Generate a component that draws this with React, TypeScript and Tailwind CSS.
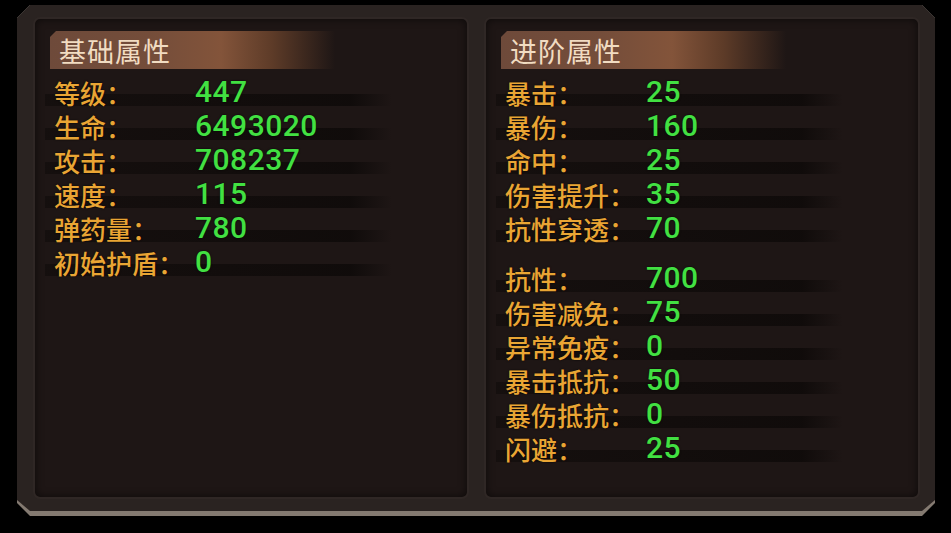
import React from "react";

type Row = { label: string; value: string };

const left: Row[] = [
  { label: "等级：", value: "447" },
  { label: "生命：", value: "6493020" },
  { label: "攻击：", value: "708237" },
  { label: "速度：", value: "115" },
  { label: "弹药量：", value: "780" },
  { label: "初始护盾：", value: "0" },
];

const right1: Row[] = [
  { label: "暴击：", value: "25" },
  { label: "暴伤：", value: "160" },
  { label: "命中：", value: "25" },
  { label: "伤害提升：", value: "35" },
  { label: "抗性穿透：", value: "70" },
];

const right2: Row[] = [
  { label: "抗性：", value: "700" },
  { label: "伤害减免：", value: "75" },
  { label: "异常免疫：", value: "0" },
  { label: "暴击抵抗：", value: "50" },
  { label: "暴伤抵抗：", value: "0" },
  { label: "闪避：", value: "25" },
];

function StatRow({ r }: { r: Row }) {
  return (
    <div className="relative flex h-[34px] items-center">
      <div className="absolute left-[10px] top-[18px] h-[12px] w-[347px] bg-[linear-gradient(to_right,rgba(10,7,6,0.45),rgba(10,7,6,0.7)_88%,rgba(10,7,6,0))]" />
      <div className="relative w-[160px] shrink-0 whitespace-nowrap pl-[19px] text-[26px] font-medium leading-none text-[#e9a534] [font-family:'Noto_Sans_CJK_SC',sans-serif] [text-shadow:0_0_2px_rgba(0,0,0,0.9)]">
        {r.label}
      </div>
      <div className="relative -mt-[2px] whitespace-nowrap text-[30px] font-medium leading-none tracking-[0.5px] text-[#42e042] [font-family:Roboto,sans-serif] [text-shadow:0_0_2px_rgba(0,0,0,0.9)]">
        {r.value}
      </div>
    </div>
  );
}

function Header({ title }: { title: string }) {
  return (
    <div className="ml-[15px] mt-[12px] flex h-[38px] w-[285px] items-center [clip-path:polygon(6px_0,100%_0,100%_100%,0_100%,0_6px)] bg-[linear-gradient(to_right,#6e4a3a,#744d3a_35%,#83543a_60%,rgba(120,75,48,0.7)_78%,rgba(40,28,24,0))]">
      <span className="pl-[9px] text-[27px] leading-none tracking-[1px] text-[#f1dcc2] [font-family:'Noto_Sans_CJK_SC',sans-serif]">
        {title}
      </span>
    </div>
  );
}

function Panel({ title, children }: { title: string; children: React.ReactNode }) {
  return (
    <div className="flex h-full w-[436px] flex-col rounded-[7px] border-2 border-[#2f2725] bg-[#1e1615] shadow-[inset_0_0_8px_rgba(0,0,0,0.6)]">
      <Header title={title} />
      <div className="mt-[7px] flex flex-col">{children}</div>
    </div>
  );
}

export default function App() {
  return (
    <div className="h-[533px] w-[951px] bg-black pt-[3px] pl-[17px]">
      <div className="h-[511px] w-[918px] bg-[#847a71] [clip-path:polygon(13px_0,calc(100%-13px)_0,100%_13px,100%_calc(100%-13px),calc(100%-13px)_100%,13px_100%,0_calc(100%-13px),0_13px)]">
        <div className="mt-[2px] h-[506px] w-[918px] bg-[#2a2321] [clip-path:polygon(13px_0,calc(100%-13px)_0,100%_13px,100%_calc(100%-11px),calc(100%-13px)_100%,13px_100%,0_calc(100%-11px),0_13px)]">
          <div className="flex h-full gap-[15px] pl-[16px] pr-[15px] pt-[12px] pb-[12px]">
            <Panel title="基础属性">
              {left.map((r) => (
                <StatRow key={r.label} r={r} />
              ))}
            </Panel>
            <Panel title="进阶属性">
              {right1.map((r) => (
                <StatRow key={r.label} r={r} />
              ))}
              <div className="h-[16px]" />
              {right2.map((r) => (
                <StatRow key={r.label} r={r} />
              ))}
            </Panel>
          </div>
        </div>
      </div>
    </div>
  );
}
